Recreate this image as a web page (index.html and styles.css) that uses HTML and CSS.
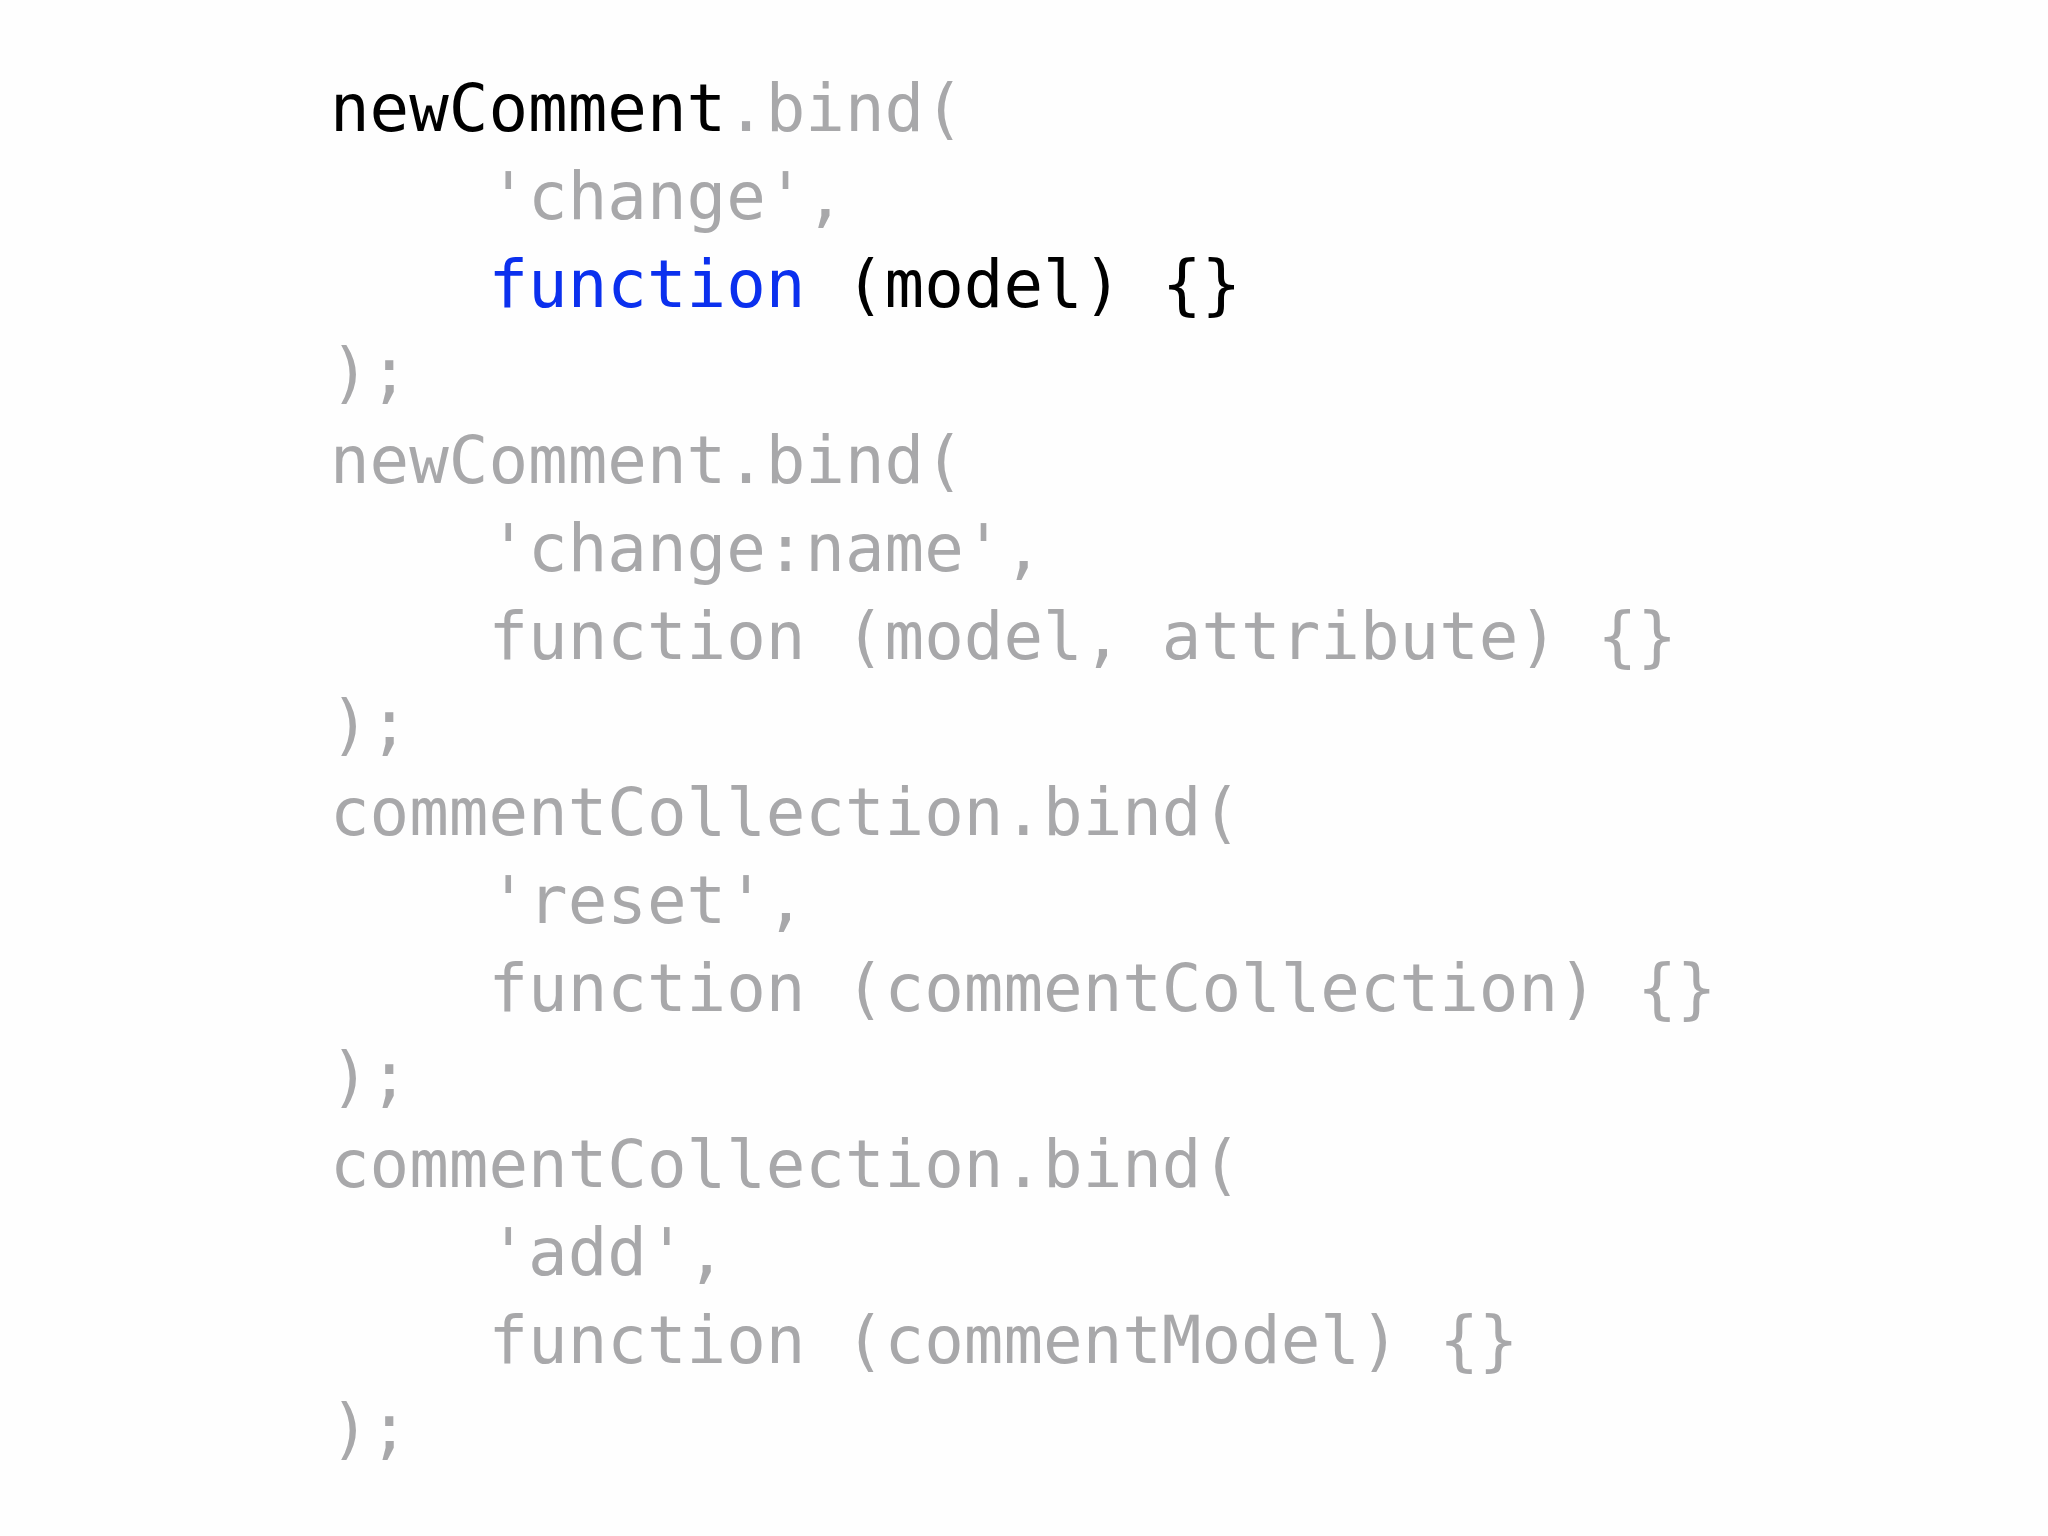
FILE: index.html
```html
<!DOCTYPE html>
<html>
<head>
<meta charset="utf-8">
<link rel="stylesheet" href="styles.css">
</head>
<body>
<pre class="code"><span class="hl">newComment</span>.bind(
    'change',
    <span class="kw">function</span> <span class="hl">(model) {}</span>
);
newComment.bind(
    'change:name',
    function (model, attribute) {}
);
commentCollection.bind(
    'reset',
    function (commentCollection) {}
);
commentCollection.bind(
    'add',
    function (commentModel) {}
);</pre>
</body>
</html>
```

FILE: styles.css
```css
html, body {
  margin: 0;
  padding: 0;
  background: #fefefe;
}
body {
  width: 2048px;
  height: 1536px;
  overflow: hidden;
}
.code {
  margin: 0;
  padding: 65px 0 0 330px;
  font-family: "DejaVu Sans Mono", "Liberation Mono", monospace;
  font-size: 65.8px;
  line-height: 88px;
  color: #a8a8aa;
}
.hl {
  color: #000000;
}
.kw {
  color: #0b30ee;
}
```
